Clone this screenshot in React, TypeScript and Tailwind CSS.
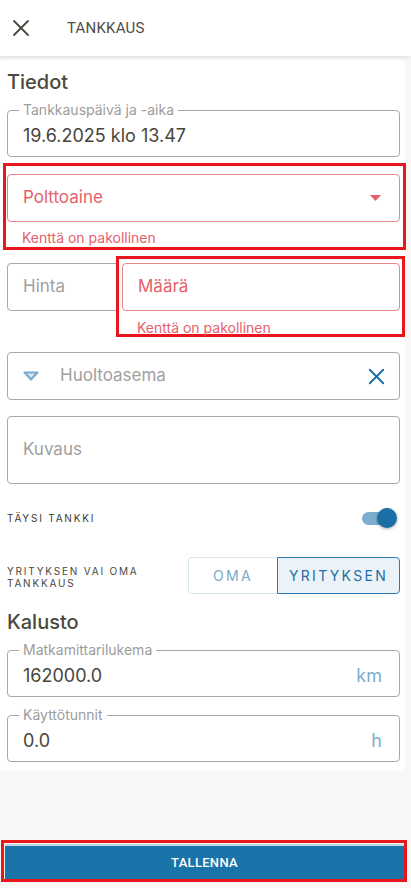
import { X } from 'lucide-react';

const font = { fontFamily: 'Inter, "Noto Sans", sans-serif' };

function Outlined({ label, value, unit }: { label: string; value: string; unit: string }) {
  return (
    <div className="relative h-[47px] rounded-[4px] border border-[#a8a8a8] flex items-center pl-[15px] pr-[17px]">
      <span className="absolute -top-[10px] left-[11px] bg-white px-[4px] text-[14px] leading-[18px] text-[#9c9c9c]">
        {label}
      </span>
      <span className="flex-1 pt-[3px] text-[18px] text-[#47453b]">{value}</span>
      {unit && <span className="pt-[3px] text-[18px] text-[#7eaecd]">{unit}</span>}
    </div>
  );
}

export default function App() {
  return (
    <div className="h-[888px] w-[411px] overflow-hidden bg-[#f9f8f6] flex flex-col" style={font}>
      {/* header */}
      <div className="h-[56px] flex-none bg-white flex items-center shadow-[0_1px_4px_rgba(0,0,0,0.12)] relative z-10">
        <X className="ml-[7px] w-[28px] h-[28px] text-[#4b4a42]" strokeWidth={1.6} />
        <span className="ml-[32px] text-[15px] tracking-[0.2px] text-[#4f4d45]" style={{ fontFamily: 'Roboto, sans-serif' }}>
          TANKKAUS
        </span>
      </div>

      {/* card */}
      <div className="mt-[4px] flex-none w-[405px] bg-white rounded-r-[4px] pl-[7px] pr-[5px] pb-[8px]">
        <h2 className="pt-[9px] text-[20px] leading-[26px] font-medium text-[#4b493e]">Tiedot</h2>

        <div className="mt-[15px]">
          <Outlined label="Tankkauspäivä ja -aika" value="19.6.2025 klo 13.47" unit="" />
        </div>

        {/* Polttoaine (highlighted) */}
        <div className="mt-[6px] -ml-[4px] -mr-[6px] h-[87px] border-[3px] border-[#e8161d] pt-[8px] pl-[1px] pr-[3px]">
          <div className="h-[48px] rounded-[4px] border border-[#e8868c] flex items-center justify-between pl-[15px] pr-[18px]">
            <span className="text-[17px] text-[#e4616b]">Polttoaine</span>
            <svg width="11" height="6" viewBox="0 0 11 6">
              <polygon points="0,0 11,0 5.5,6" fill="#e4616b" />
            </svg>
          </div>
          <div className="mt-[7px] pl-[15px] text-[14px] leading-[18px] text-[#e4616b]">Kenttä on pakollinen</div>
        </div>

        {/* Hinta + Määrä */}
        <div className="mt-[6px] flex items-start">
          <div className="mt-[7px] w-[112px] h-[48px] rounded-[4px] border border-[#a8a8a8] flex items-center pl-[15px] text-[17px] text-[#a0a0a0]">
            Hinta
          </div>
          <div className="-ml-[3px] -mr-[5px] flex-1 h-[81px] bg-white border-[3px] border-[#e8161d] pt-[4px] pl-[3px] pr-[2px]">
            <div className="h-[48px] rounded-[4px] border border-[#e8868c] flex items-center pl-[15px]">
              <span className="text-[17px] text-[#e4616b]">Määrä</span>
            </div>
            <div className="mt-[8px] pl-[15px] text-[14px] leading-[18px] text-[#e4616b]">Kenttä on pakollinen</div>
          </div>
        </div>

        {/* Huoltoasema */}
        <div className="mt-[15px] h-[48px] rounded-[4px] border border-[#a8a8a8] flex items-center pl-[15px] pr-[9px]">
          <svg width="16" height="10" viewBox="0 0 16 10">
            <polygon points="1.5,1.5 14.5,1.5 8,8.5" fill="#d3e5f0" stroke="#79acce" strokeWidth="2.2" strokeLinejoin="round" />
          </svg>
          <span className="ml-[21px] flex-1 text-[17px] text-[#a0a0a0]">Huoltoasema</span>
          <X className="w-[27px] h-[27px] text-[#1c6ea4]" strokeWidth={1.7} />
        </div>

        {/* Kuvaus */}
        <div className="mt-[16px] h-[68px] rounded-[4px] border border-[#a8a8a8] flex items-center pl-[15px] text-[17px] text-[#a0a0a0]">
          Kuvaus
        </div>

        {/* Täysi tankki */}
        <div className="mt-[24px] h-[20px] flex items-center justify-between">
          <span className="text-[10px] tracking-[1.8px] text-[#3b3a33]">TÄYSI TANKKI</span>
          <div className="relative w-[35px] h-[20px] mr-[3px] flex items-center">
            <div className="w-[28px] h-[13px] rounded-full bg-[#7eaecf]" />
            <div className="absolute right-0 top-0 w-[20px] h-[20px] rounded-full bg-[#1b6fa5] shadow-[0_1px_3px_rgba(0,0,0,0.35)]" />
          </div>
        </div>

        {/* Yrityksen vai oma */}
        <div className="mt-[29px] h-[37px] flex items-center justify-between">
          <span className="text-[10px] leading-[12px] tracking-[1.8px] text-[#4a4940] pt-[2px]">
            YRITYKSEN VAI OMA
            <br />
            TANKKAUS
          </span>
          <div className="flex h-[37px] w-[212px] text-[14px] tracking-[2.3px]">
            <div className="w-[89px] flex items-center justify-center rounded-l-[4px] border border-r-0 border-[#d9e7f0] text-[#7aaacb]">
              OMA
            </div>
            <div className="flex-1 flex items-center justify-center rounded-r-[4px] border border-[#2c7bb1] bg-[#ebf3f8] text-[#1f6ea3]">
              YRITYKSEN
            </div>
          </div>
        </div>

        <h2 className="mt-[15px] text-[20px] leading-[26px] font-medium text-[#4b493e]">Kalusto</h2>

        <div className="mt-[15px]">
          <Outlined label="Matkamittarilukema" value="162000.0" unit="km" />
        </div>
        <div className="mt-[18px]">
          <Outlined label="Käyttötunnit" value="0.0" unit="h" />
        </div>
      </div>

      <div className="flex-1" />

      {/* save */}
      <div className="mb-[6px] mx-[1px] w-[406px] border-[3px] border-[#e8161d] pt-[1px] pl-[1px]">
        <button
          className="w-full h-[35px] bg-[#1a73a9] border-t-2 border-[#c5d7e3] text-white text-[13px] font-medium tracking-[0.3px]"
          style={{ fontFamily: 'Roboto, sans-serif' }}
        >
          TALLENNA
        </button>
      </div>
    </div>
  );
}
